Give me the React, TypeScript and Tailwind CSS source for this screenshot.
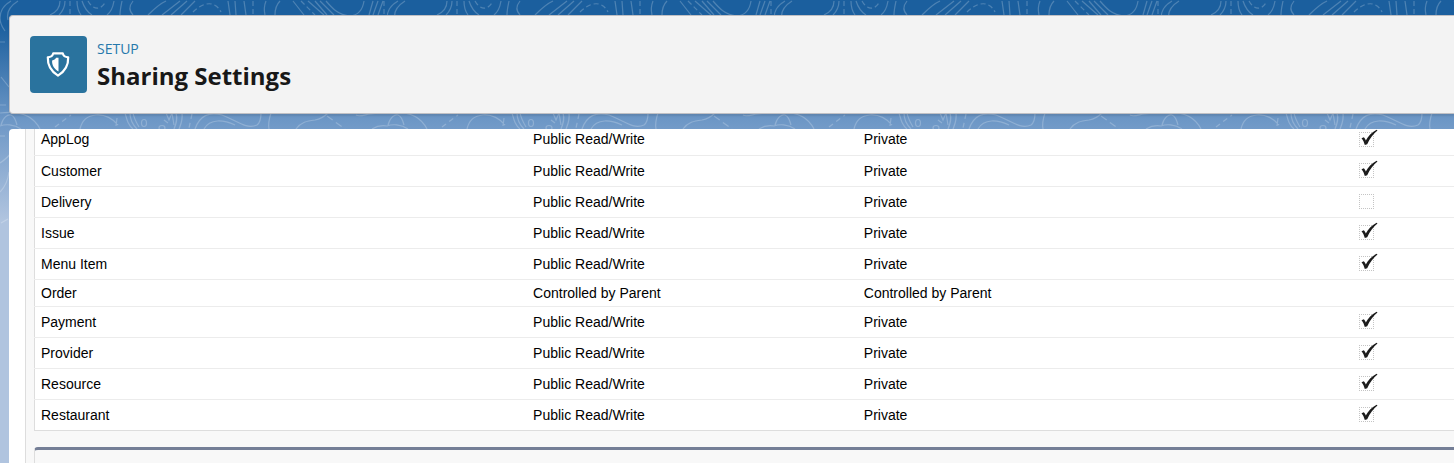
import React from "react";

type Row = { name: string; internal: string; external: string; grant: boolean | null };

const rows: Row[] = [
  { name: "AppLog", internal: "Public Read/Write", external: "Private", grant: true },
  { name: "Customer", internal: "Public Read/Write", external: "Private", grant: true },
  { name: "Delivery", internal: "Public Read/Write", external: "Private", grant: false },
  { name: "Issue", internal: "Public Read/Write", external: "Private", grant: true },
  { name: "Menu Item", internal: "Public Read/Write", external: "Private", grant: true },
  { name: "Order", internal: "Controlled by Parent", external: "Controlled by Parent", grant: null },
  { name: "Payment", internal: "Public Read/Write", external: "Private", grant: true },
  { name: "Provider", internal: "Public Read/Write", external: "Private", grant: true },
  { name: "Resource", internal: "Public Read/Write", external: "Private", grant: true },
  { name: "Restaurant", internal: "Public Read/Write", external: "Private", grant: true },
];

// Topographic line art, repeated horizontally behind the panels.
function Backdrop() {
  return (
    <svg className="absolute inset-0 h-full w-full" aria-hidden="true">
      <defs>
        <pattern id="topo" width="387" height="260" patternUnits="userSpaceOnUse">
          <g fill="none" stroke="#ffffff" strokeOpacity="0.22" strokeWidth="1.2">
            <path d="M11 1C4 5 0 10 0 18c0 5 2 9 5 13M18 1C10 6 6 12 8 20" />
            <path d="M60 1c0 6-3 11-10 14M65 1c0 6-2 10-6 14M77 1c0 6 1 10 4 14M82 1c2 6 5 11 10 14M114 1c-1 6-3 11-7 14" />
            <path d="M70 1v14M88 1c5 9 13 10 18 0" strokeDasharray="5 3" />
            <path d="M122 1c-1 5-2 9-2 14M133 1c-4 5-4 10 0 14" />
            <path d="M166 1c-7 3-12 8-18 14M180 1l-18 14M187 1l-16 14M195 1l-14 14" />
            <path d="M193 12c10-10 22-12 28 0M253 1v14" strokeDasharray="5 3" />
            <path d="M228 1l2 14M235 1l1 14M244 1l2 14M266 1c-2 5-2 10-1 14M280 1c-4 4-5 9-5 14" />
            <path d="M293 1l11 14M308 1l16 14M315 1l12 14M320 1l14 14M326 1c6 7 12 14 24 15 10-1 13-8 14-15" />
            <path d="M301 1l14 14M384 1v14" strokeDasharray="5 3" />
            <path d="M373 1l-4 14M378 1l-5 14M383 1l-5 14" />
            <path d="M1 125c2-8 7-11 10-10 3 1 5 6 6 10M0 126c5-2 14-2 21 3M0 163c7-5 12-9 15-18M0 192c5-5 8-12 9-20M0 136h5" />
            <path d="M0 42h5M1 77l8 10M0 105h6M1 223l7-4" />
            <path d="M80 129c4-18 26-18 38-4M125 113c2 7 3 12 8 16M130 113c0 7 3 12 7 16M133 113c1 5 3 9 6 14M117 118l-1 8" />
            <path d="M166 113l3 7 3-7 2 12M164 120l4 3M176 113c2 6 0 11-2 16M182 113c1 7-1 11-3 16" />
            <ellipse cx="144" cy="123" rx="2.5" ry="3.5" />
            <ellipse cx="162" cy="128" rx="3" ry="2.5" />
            <path d="M55 127l16-12M192 114l-3 14" strokeDasharray="5 4" />
            <path d="M195 129c5-14 14-17 27-14 14 5 24 15 35 10 4-3 4-8 4-12M204 129c6-11 20-9 31-4M271 113c-2 6-3 11-2 16" />
            <path d="M296 129c5-7 11-8 19-9 6-1 10-4 13-7M356 115c3 2 8 0 14-1 7-1 12-1 17-1M0 113c15-2 32 0 40 16M372 129c5-3 10-4 15-3" />
            <path d="M327 116l18 13" strokeDasharray="7 4" />
          </g>
        </pattern>
      </defs>
      <rect width="100%" height="240" fill="url(#topo)" />
    </svg>
  );
}

function Grant({ row }: { row: Row }) {
  if (row.grant === null) return null;
  return (
    <label className="relative ml-1 block size-[15px]">
      <input
        type="checkbox"
        checked={row.grant}
        readOnly
        aria-label={`Grant access using hierarchies for ${row.name}`}
        className="block size-full appearance-none border border-dotted border-[#c4c4c4] bg-transparent"
      />
      {row.grant && (
        <svg className="absolute bottom-0 left-0 h-[18px] w-[19px]" viewBox="0 0 19 18" aria-hidden="true">
          <path
            d="M2.500 9.200 4.800 8.200c1 .9 1.500 1.900 2 3.200C9 7.500 12.500 3.400 17.600.8l.9.8C14.200 5.100 10.900 9.400 8.200 15.300l-2.400.8C5.100 13.300 4.100 11 2.500 9.200z"
            fill="#1c1c1c"
          />
        </svg>
      )}
    </label>
  );
}

export default function App() {
  return (
    <div className="relative flex min-h-screen flex-col overflow-hidden bg-[#b0c4df] bg-[linear-gradient(#1b5f9e_0px,#1b5f9e_25px,#6d97c6_120px,#b0c4df_220px)] pt-[15px] pl-[9px] font-['Liberation_Sans',Arial,sans-serif] text-black">
      <Backdrop />
      <header className="relative flex items-center gap-2.5 rounded-l border border-r-0 border-[#c0c0c4] bg-[#f3f3f3] px-5 py-5 font-['Open_Sans','Noto_Sans',sans-serif] shadow-[0_2px_2px_rgba(0,0,0,0.1)]">
        <span className="flex size-[57px] shrink-0 items-center justify-center rounded bg-[#2a739e]">
          <svg className="size-7" viewBox="0 0 28 28" aria-hidden="true">
            <path
              d="M8.700 2.900h9.600c.5 2.400 2.400 3.700 5.400 3.900.3 8.200-3 14-10.200 18.300C6.300 20.800 3 15 3.300 6.800c3-.2 4.900-1.500 5.400-3.900z"
              transform="translate(-.5 -.5)"
              fill="none"
              stroke="#fff"
              strokeWidth="2.200"
              strokeLinejoin="round"
            />
            <path d="M13.500 6.800v13.800c-4.500-2.800-6.700-6.400-6.400-11 2-.6 3.200-1.300 4-2.800z" fill="#fff" />
          </svg>
        </span>
        <div className="pt-[3px]">
          <p className="text-sm leading-5 text-[#2678ab]">SETUP</p>
          <h1 className="text-2xl leading-[34px] font-bold text-[#181818]">Sharing Settings</h1>
        </div>
      </header>

      <main className="relative mt-[15px] flex flex-1 flex-col overflow-hidden rounded-tl bg-white pl-4">
        <div className="flex flex-1 flex-col border-l border-[#dddddd] bg-[#f8f8f8] pl-2">
          <table className="-mt-[5px] w-full table-fixed border-b border-l border-[#dddddd] bg-white text-left text-sm leading-4">
            <colgroup>
              <col className="w-[34.7%]" />
              <col className="w-[23.3%]" />
              <col className="w-[35%]" />
              <col />
            </colgroup>
            <tbody>
              {rows.map((row) => (
                <tr
                  key={row.name}
                  className={`border-b border-[#ececec] last:border-b-0 ${row.grant === null ? "h-[27px]" : "h-[31px]"}`}
                >
                  <th scope="row" className="px-1.5 py-0 font-normal">{row.name}</th>
                  <td className="px-1.5 py-0">{row.internal}</td>
                  <td className="px-1.5 py-0">{row.external}</td>
                  <td className="p-0">
                    <Grant row={row} />
                  </td>
                </tr>
              ))}
            </tbody>
          </table>
          <section className="mt-4 min-h-4 flex-1 rounded-tl border-t-[3px] border-l border-t-[#747e96] border-l-[#dddddd]" />
        </div>
      </main>
    </div>
  );
}
